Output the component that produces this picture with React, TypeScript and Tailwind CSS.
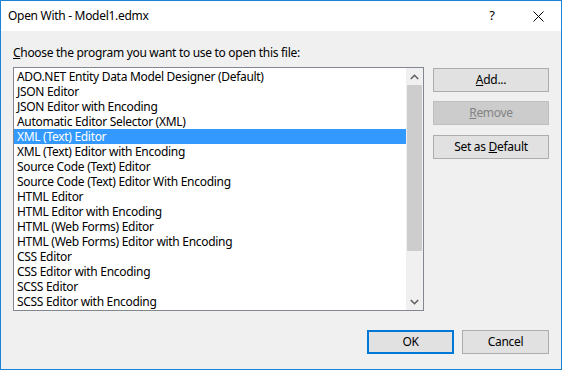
import React from "react";

const items = [
  "ADO.NET Entity Data Model Designer (Default)",
  "JSON Editor",
  "JSON Editor with Encoding",
  "Automatic Editor Selector (XML)",
  "XML (Text) Editor",
  "XML (Text) Editor with Encoding",
  "Source Code (Text) Editor",
  "Source Code (Text) Editor With Encoding",
  "HTML Editor",
  "HTML Editor with Encoding",
  "HTML (Web Forms) Editor",
  "HTML (Web Forms) Editor with Encoding",
  "CSS Editor",
  "CSS Editor with Encoding",
  "SCSS Editor",
  "SCSS Editor with Encoding",
];

export default function App() {
  return (
    <div
      className="w-[562px] h-[370px] border border-[#1883d7] flex flex-col bg-[#f0f0f0] text-[12px] tracking-[-0.3px] text-black overflow-hidden"
      style={{ fontFamily: '"Noto Sans", "Segoe UI", sans-serif' }}
    >
      {/* Title bar */}
      <div className="h-[30px] bg-white flex items-center shrink-0">
        <div className="pl-[7px] flex-1 leading-[16px]">Open With - Model1.edmx</div>
        <div className="w-[46px] h-[30px] flex items-center justify-center text-[13px]">?</div>
        <div className="w-[46px] h-[30px] flex items-center justify-center">
          <svg width="11" height="11" viewBox="0 0 11 11">
            <path d="M0.5 0.5 L10.5 10.5 M10.5 0.5 L0.5 10.5" stroke="#000" strokeWidth="1" />
          </svg>
        </div>
      </div>

      {/* Body */}
      <div className="flex-1 flex flex-col px-[12px] pt-[14px]">
        <div className="leading-[16px]">
          <u>C</u>hoose the program you want to use to open this file:
        </div>
        <div className="flex mt-[6px] gap-[9px]">
          <div className="w-[411px] h-[244px] border border-[#828790] bg-white flex">
            <div className="flex-1 pt-[1px] overflow-hidden">
              {items.map((t, i) => (
                <div
                  key={t}
                  className={
                    "h-[15px] leading-[15px] pl-[3px] whitespace-nowrap " +
                    (i === 4 ? "bg-[#3399ff] text-white" : "")
                  }
                >
                  {t}
                </div>
              ))}
            </div>
            <div className="w-[17px] bg-[#f0f0f0] flex flex-col">
              <div className="h-[17px] flex items-center justify-center">
                <svg width="9" height="6" viewBox="0 0 9 6">
                  <path d="M0.8 5 L4.5 1.3 L8.2 5" stroke="#606060" strokeWidth="1.6" fill="none" />
                </svg>
              </div>
              <div className="mx-[1px] h-[166px] bg-[#cdcdcd]" />
              <div className="flex-1" />
              <div className="h-[17px] flex items-center justify-center">
                <svg width="9" height="6" viewBox="0 0 9 6">
                  <path d="M0.8 1 L4.5 4.7 L8.2 1" stroke="#606060" strokeWidth="1.6" fill="none" />
                </svg>
              </div>
            </div>
          </div>
          <div className="w-[116px] flex flex-col pt-[1px]">
            <div className="h-[24px] border border-[#adadad] bg-[#e1e1e1] flex items-center justify-center">
              <span>
                <u>A</u>dd...
              </span>
            </div>
            <div className="mt-[9px] h-[24px] border border-[#bfbfbf] bg-[#cccccc] text-[#838383] flex items-center justify-center">
              <span>
                <u>R</u>emove
              </span>
            </div>
            <div className="mt-[10px] h-[24px] border border-[#adadad] bg-[#e1e1e1] flex items-center justify-center">
              <span>
                Set as <u>D</u>efault
              </span>
            </div>
          </div>
        </div>
        <div className="flex justify-end gap-[8px] mt-[19px]">
          <div className="w-[87px] h-[24px] border-2 border-[#0078d7] bg-[#e1e1e1] flex items-center justify-center">
            OK
          </div>
          <div className="w-[87px] h-[24px] border border-[#adadad] bg-[#e1e1e1] flex items-center justify-center">
            Cancel
          </div>
        </div>
      </div>
    </div>
  );
}
